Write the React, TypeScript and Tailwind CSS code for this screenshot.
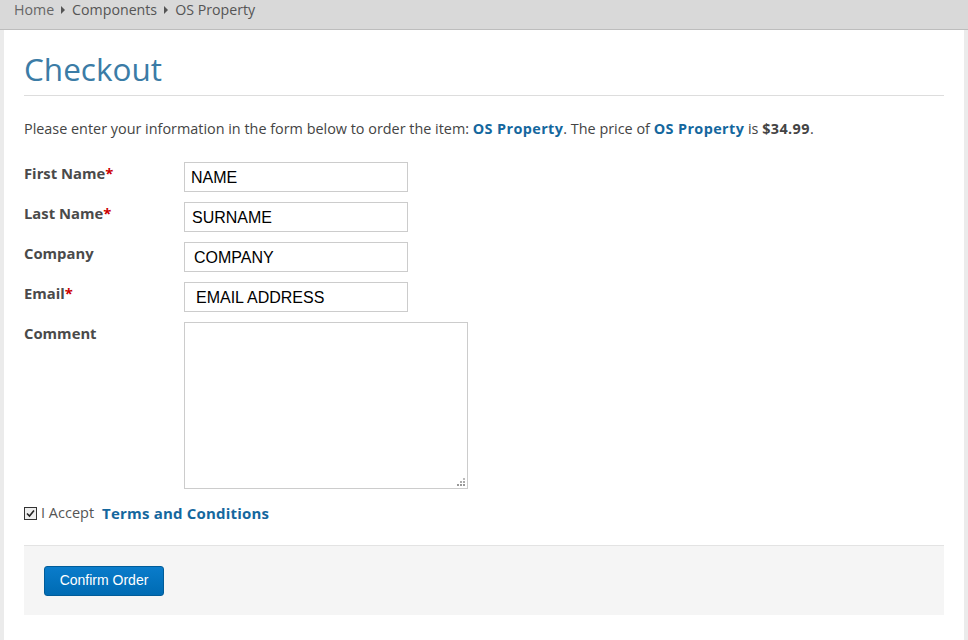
import React from 'react';

const Caret = () => <span className="inline-block w-0 h-0 border-y-[4px] border-y-transparent border-l-[4px] border-l-[#555] mx-[7px] align-middle" />;

const Field = ({ label, required, value, pad }: { label: string; required?: boolean; value: string; pad: string }) => (
    <div className="flex items-start h-[40px]">
        <label className="w-[160px] text-[14.8px] font-bold text-[#4a4a4a]">
            {label}
            {required && <span className="text-[#c00]">*</span>}
        </label>
        <div className={`w-[224px] h-[30px] border border-[#ccc] bg-white flex items-center pt-[1px] text-[16px] text-black ${pad}`} style={{ fontFamily: '"Liberation Sans", Arial, sans-serif' }}>
            {value}
        </div>
    </div>
);

export default function App() {
    return (
        <div className="w-[968px] h-[640px] bg-[#ebebeb] flex flex-col overflow-hidden" style={{ fontFamily: '"Open Sans", sans-serif' }}>
            <div className="h-[30px] shrink-0 bg-[#d9d9d9] border-b border-[#bdbdbd] flex items-start pl-[14px] text-[14.2px] leading-[20px] text-[#555]">
                <span className="text-[#666]">Home</span>
                <span className="h-[20px] flex items-center"><Caret /></span>
                <span>Components</span>
                <span className="h-[20px] flex items-center"><Caret /></span>
                <span>OS Property</span>
            </div>
            <div className="flex-1 mx-[4px] bg-white px-[20px]">
                <h1 className="pt-[20px] pb-[7px] text-[31.5px] leading-[38px] text-[#3b7ca6] border-b border-[#ddd]">
                    Checkout
                </h1>
                <p className="mt-[23px] text-[14.4px] leading-[20px] text-[#444]">
                    Please enter your information in the form below to order the item: <a className="font-bold tracking-[0.4px] text-[#14679e]">OS Property</a>. The price of <a className="font-bold tracking-[0.4px] text-[#14679e]">OS Property</a> is <b className="font-bold tracking-[0.4px]">$34.99</b>.
                </p>
                <div className="mt-[23px]">
                    <Field label="First Name" required value="NAME" pad="pl-[6px]" />
                    <Field label="Last Name" required value="SURNAME" pad="pl-[7px]" />
                    <Field label="Company" value="COMPANY" pad="pl-[9px]" />
                    <Field label="Email" required value="EMAIL ADDRESS" pad="pl-[11px]" />
                    <div className="flex items-start">
                        <label className="w-[160px] text-[14.8px] font-bold text-[#4a4a4a]">Comment</label>
                        <div className="relative w-[284px] h-[167px] border border-[#ccc]">
                            <svg className="absolute right-[2px] bottom-[2px]" width="8" height="8" viewBox="0 0 8 8">
                                <rect x="6" y="0" width="2" height="2" fill="#bbb" />
                                <rect x="3" y="3" width="2" height="2" fill="#aaa" />
                                <rect x="6" y="3" width="2" height="2" fill="#aaa" />
                                <rect x="0" y="6" width="2" height="2" fill="#999" />
                                <rect x="3" y="6" width="2" height="2" fill="#999" />
                                <rect x="6" y="6" width="2" height="2" fill="#999" />
                            </svg>
                        </div>
                    </div>
                </div>
                <div className="mt-[14px] flex items-center text-[14.5px] h-[20px]">
                    <span className="w-[13px] h-[13px] border border-[#333] bg-[#eee] flex items-center justify-center">
                        <svg width="9" height="9" viewBox="0 0 9 9"><path d="M1 4.5 L3.5 7 L8 1.5" stroke="#222" strokeWidth="1.6" fill="none" /></svg>
                    </span>
                    <span className="ml-[4px] text-[#555]">I Accept</span>
                    <a className="ml-[8px] font-bold tracking-[0.2px] text-[#14679e] text-[15px]">Terms and Conditions</a>
                </div>
                <div className="mt-[22px] h-[70px] bg-[#f5f5f5] border-t border-[#e3e3e3] flex items-center px-[20px]">
                    <button className="w-[120px] h-[30px] rounded-[3px] bg-gradient-to-b from-[#0a7ccb] to-[#006bb3] border border-[#005c99] text-white text-[14px]" style={{ fontFamily: '"Liberation Sans", Arial, sans-serif' }}>
                        Confirm Order
                    </button>
                </div>
            </div>
        </div>
    );
}
